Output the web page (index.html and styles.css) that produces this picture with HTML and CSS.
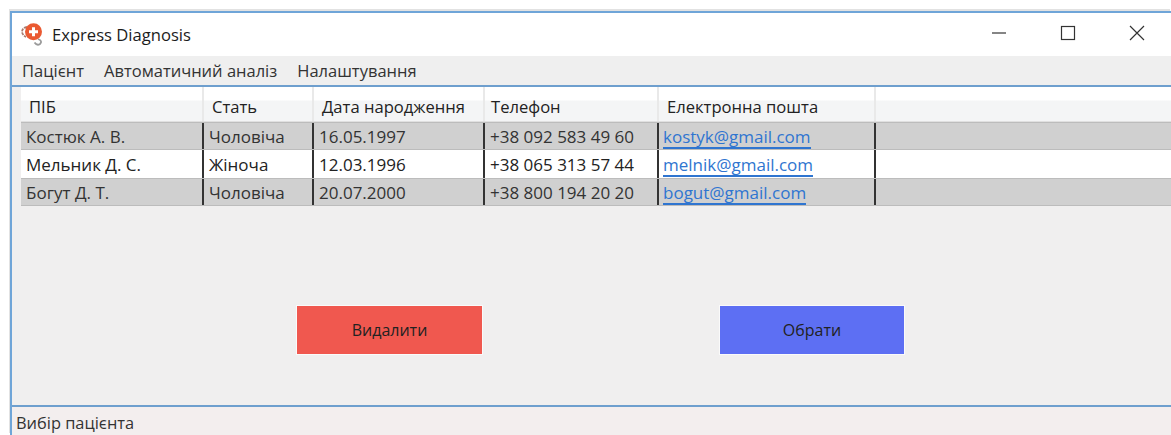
FILE: index.html
```html
<!DOCTYPE html>
<html lang="uk">
<head>
<meta charset="utf-8">
<title>Express Diagnosis</title>
<link rel="stylesheet" href="styles.css">
</head>
<body>
<div class="window">
  <header class="titlebar">
    <div class="title">
      <svg class="app-icon" width="26" height="26" viewBox="0 0 26 26">
        <path d="M6 5 Q1 6 1 10 Q1.500 13 5 15" fill="none" stroke="#a87a6e" stroke-width="1.800" stroke-dasharray="3 1"/>
        <path d="M17 17 Q22 19 19 22 Q16 24 13.500 20.500" fill="none" stroke="#9a9a9a" stroke-width="1.800"/>
        <circle cx="12.500" cy="9.800" r="8.500" fill="#ea5a32"/>
        <path d="M11 5.300h3v3h3v3h-3v3h-3v-3H8v-3h3z" fill="#fff"/>
      </svg>
      <span>Express Diagnosis</span>
    </div>
    <div class="controls">
      <svg width="16" height="16" viewBox="0 0 16 16"><path d="M1 8h14" stroke="#333" stroke-width="1.200"/></svg>
      <svg width="16" height="16" viewBox="0 0 16 16"><rect x="1.500" y="1.500" width="13" height="13" fill="none" stroke="#333" stroke-width="1.200"/></svg>
      <svg width="16" height="16" viewBox="0 0 16 16"><path d="M1 1l14 14M15 1L1 15" stroke="#333" stroke-width="1.200"/></svg>
    </div>
  </header>
  <nav class="menu">
    <span>Пацієнт</span>
    <span>Автоматичний аналіз</span>
    <span>Налаштування</span>
  </nav>
  <main class="content">
    <div class="grid">
      <div class="row head">
        <div class="cell">ПІБ</div>
        <div class="cell">Стать</div>
        <div class="cell">Дата народження</div>
        <div class="cell">Телефон</div>
        <div class="cell">Електронна пошта</div>
        <div class="cell"></div>
      </div>
      <div class="row odd">
        <div class="cell">Костюк А. В.</div>
        <div class="cell">Чоловіча</div>
        <div class="cell">16.05.1997</div>
        <div class="cell">+38 092 583 49 60</div>
        <div class="cell"><a class="mail">kostyk@gmail.com</a></div>
        <div class="cell"></div>
      </div>
      <div class="row even">
        <div class="cell">Мельник Д. С.</div>
        <div class="cell">Жіноча</div>
        <div class="cell">12.03.1996</div>
        <div class="cell">+38 065 313 57 44</div>
        <div class="cell"><a class="mail">melnik@gmail.com</a></div>
        <div class="cell"></div>
      </div>
      <div class="row odd">
        <div class="cell">Богут Д. Т.</div>
        <div class="cell">Чоловіча</div>
        <div class="cell">20.07.2000</div>
        <div class="cell">+38 800 194 20 20</div>
        <div class="cell"><a class="mail">bogut@gmail.com</a></div>
        <div class="cell"></div>
      </div>
    </div>
    <div class="actions">
      <button class="btn btn-delete">Видалити</button>
      <button class="btn btn-select">Обрати</button>
    </div>
  </main>
  <footer class="status">Вибір пацієнта</footer>
</div>
</body>
</html>
```

FILE: styles.css
```css
* { box-sizing: border-box; }

html, body {
  margin: 0;
  height: 100%;
  overflow: hidden;
  background: #fff;
}

body {
  padding: 11px 0 0 10px;
  font-family: "Open Sans", "Noto Sans", sans-serif;
  font-size: 16px;
  color: #222;
}

.window {
  height: 424px;
  display: flex;
  flex-direction: column;
  border-left: 2px solid #6fa5d8;
  border-top: 2px solid #6fa5d8;
  box-shadow: -1px -2px 0 #e2e2e2;
  background: #fff;
}

.titlebar {
  height: 43px;
  flex: none;
  display: flex;
  align-items: center;
  justify-content: space-between;
  background: #fff;
}

.title {
  display: flex;
  align-items: center;
  gap: 5px;
  padding-left: 9px;
  font-size: 16.6px;
  color: #1c1c1c;
}

.controls {
  display: flex;
  gap: 53px;
  padding: 0 26px 3px 0;
}

.menu {
  height: 29px;
  flex: none;
  display: flex;
  align-items: center;
  gap: 20px;
  padding-left: 10px;
  background: #efefef;
  font-size: 16.5px;
  color: #333;
}

.content {
  flex: 1;
  display: flex;
  flex-direction: column;
  background: #f0efef;
  border-top: 2px solid #6e9fce;
}

.grid {
  flex: none;
  padding-left: 9px;
}

.row {
  display: grid;
  grid-template-columns: 183px 110px 171px 174px 217px 1fr;
  height: 28px;
  font-size: 17px;
}

.row.head {
  height: 35px;
  font-size: 16.6px;
  background: linear-gradient(#fff 0, #fff 13px, #f4f5f6 14px, #f4f5f6 100%);
  border-bottom: 1px solid #e0e0e0;
}

.row.odd {
  background: #d0d0d0;
  border-top: 1px solid #bcbcbc;
  border-bottom: 1px solid #bcbcbc;
}

.row.even {
  background: #fff;
}

.cell {
  display: flex;
  align-items: center;
  border-right: 2px solid #333;
  padding-left: 5px;
  white-space: nowrap;
  color: #333;
}

.row.even .cell {
  color: #222;
}

.row.head .cell {
  border-right: 2px solid #e9e9e9;
  padding: 4px 0 0 8px;
  color: #222;
}

.row.head .cell:nth-child(4) {
  padding-left: 6px;
}

.cell:last-child,
.row.head .cell:last-child {
  border-right: 0;
}

.mail {
  color: #2f75d0;
  border-bottom: 2px solid #2f75d0;
  line-height: 21px;
  margin: 3px 0 0 -1px;
}

.actions {
  display: flex;
  gap: 236px;
  padding: 99px 0 0 284px;
}

.btn {
  width: 187px;
  height: 50px;
  border: 1px solid #fafafa;
  font: inherit;
  color: #222;
}

.btn-delete { background: #f0584f; }
.btn-select { width: 186px; background: #5d6ff3; }

.status {
  height: 30px;
  flex: none;
  display: flex;
  align-items: center;
  padding: 3px 0 0 4px;
  border-top: 2px solid #6e9fce;
  background: #f3eeee;
  font-size: 16.4px;
  color: #333;
}
```
